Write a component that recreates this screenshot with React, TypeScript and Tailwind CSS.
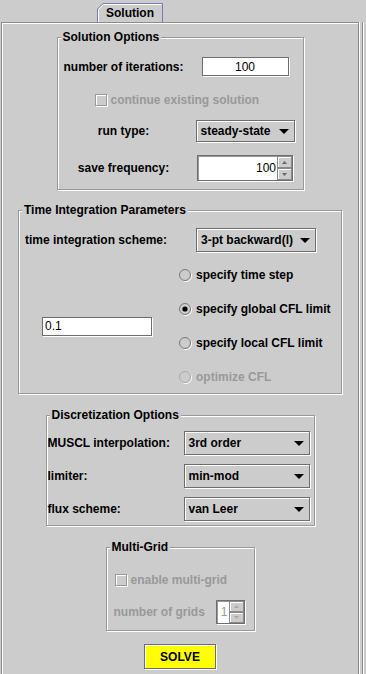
import React from "react";

type Kids = { children?: React.ReactNode; className?: string };

function Arrow() {
  return (
    <svg width="10" height="5" viewBox="0 0 10 5" className="shrink-0">
      <polygon points="0,0 10,0 5,5" fill="#000" />
    </svg>
  );
}

function Combo({ value, className = "" }: { value: string; className?: string }) {
  return (
    <div
      className={`flex items-center justify-between bg-[#cccccc] border border-[#6e6e6e] shadow-[inset_1px_1px_0_#fff,1px_1px_0_#fff] pl-[4px] pr-[5px] ${className}`}
    >
      <span>{value}</span>
      <Arrow />
    </div>
  );
}

function TextField({ value, className = "" }: { value: string; className?: string }) {
  return (
    <div
      className={`flex items-center bg-white border border-[#6e6e6e] shadow-[1px_1px_0_#fff] font-normal ${className}`}
    >
      {value}
    </div>
  );
}

function SpinBtn({ up, disabled }: { up?: boolean; disabled?: boolean }) {
  return (
    <div className="flex-1 flex items-center justify-center bg-[#cccccc] border border-[#8a8a8a] shadow-[inset_1px_1px_0_#fff]">
      <svg width="5" height="3" viewBox="0 0 5 3">
        <polygon points={up ? "0,3 5,3 2.5,0" : "0,0 5,0 2.5,3"} fill={disabled ? "#aaa" : "#666"} />
      </svg>
    </div>
  );
}

function Spinner({
  value,
  className = "",
  disabled,
}: {
  value: string;
  className?: string;
  disabled?: boolean;
}) {
  return (
    <div className={`flex border border-[#6e6e6e] shadow-[1px_1px_0_#fff] ${className}`}>
      <div
        className={`flex-1 flex items-center justify-end pr-px bg-white font-normal shadow-[inset_1px_1px_0_#999] ${
          disabled ? "text-[#999]" : ""
        }`}
      >
        {value}
      </div>
      <div className="flex flex-col w-[15px]">
        <SpinBtn up disabled={disabled} />
        <SpinBtn disabled={disabled} />
      </div>
    </div>
  );
}

function CheckBox() {
  return (
    <span className="inline-block shrink-0 w-[12px] h-[12px] border border-[#999] shadow-[inset_1px_1px_0_#fff,1px_1px_0_#fff]" />
  );
}

function Radio({ checked, disabled }: { checked?: boolean; disabled?: boolean }) {
  return (
    <svg width="13" height="13" viewBox="0 0 13 13" className="shrink-0">
      <circle cx="7" cy="7" r="5.5" fill="none" stroke="#fff" />
      <circle cx="6" cy="6" r="5.5" fill="#cccccc" stroke={disabled ? "#aaa" : "#777"} />
      {checked && <circle cx="6" cy="6" r="2.6" fill="#000" />}
    </svg>
  );
}

function Group({ title, className = "", children }: Kids & { title: string }) {
  return (
    <fieldset
      className={`border border-[#999] shadow-[inset_1px_1px_0_#fff,1px_1px_0_#fff] ${className}`}
    >
      <legend className="ml-[3px] px-[2px] bg-[#cccccc] leading-[14px]">{title}</legend>
      {children}
    </fieldset>
  );
}

function RadioRow({ label, checked, disabled }: { label: string; checked?: boolean; disabled?: boolean }) {
  return (
    <div className={`flex items-center gap-[4px] h-[14px] ${disabled ? "text-[#999]" : ""}`}>
      <Radio checked={checked} disabled={disabled} />
      <span>{label}</span>
    </div>
  );
}

function DiscRow({ label, value, className = "" }: { label: string; value: string; className?: string }) {
  return (
    <div className={`flex items-center h-[24px] ${className}`}>
      <span className="w-[137px] pl-px">{label}</span>
      <Combo value={value} className="w-[126px] h-[24px]" />
    </div>
  );
}

export default function App() {
  return (
    <div className="w-[366px] h-[674px] overflow-hidden bg-[#cccccc] text-black font-bold text-[12px] leading-[14px] font-['Liberation_Sans',Arial,sans-serif] flex flex-col">
      {/* tab strip */}
      <div className="h-[22px] shrink-0">
        <div className="relative ml-[97px] mt-[3px] w-[66px] h-[19px] flex items-center justify-center">
          <svg width="66" height="19" viewBox="0 0 66 19" className="absolute inset-0">
            <path d="M0.5 19 V6 L6 0.5 H65.5 V19" fill="#cccccc" stroke="#7a7aae" />
            <path d="M1.5 19 V6.5 L6.5 1.5 H64.5" fill="none" stroke="#fff" />
          </svg>
          <span className="relative">Solution</span>
        </div>
      </div>

      <div className="flex flex-1">
        <div className="ml-px w-[358px] flex flex-col items-center border-l border-t border-r border-[#8c8c8c] shadow-[inset_1px_1px_0_#fff,1px_0_0_#fff]">
          {/* Solution Options */}
          <Group title="Solution Options" className="mt-[7px] w-[247px] pb-[8px]">
            <div className="grid grid-cols-[132px_111px] justify-items-center">
              <div className="mt-[13px] h-[19px] flex items-center">number of iterations:</div>
              <TextField value="100" className="mt-[13px] w-[87px] h-[19px] justify-center" />

              <div className="col-span-2 justify-self-start mt-[17px] h-[13px] pl-[37px] flex items-center gap-[4px] text-[#999]">
                <CheckBox />
                <span>continue existing solution</span>
              </div>

              <div className="mt-[14px] h-[22px] flex items-center">run type:</div>
              <Combo value="steady-state" className="mt-[14px] w-[99px] h-[22px]" />

              <div className="mt-[13px] h-[26px] flex items-center">save frequency:</div>
              <Spinner value="100" className="mt-[13px] w-[96px] h-[26px]" />
            </div>
          </Group>

          {/* Time Integration Parameters */}
          <Group title="Time Integration Parameters" className="mt-[13px] w-[324px] pb-[9px]">
            <div className="mt-[11px] flex items-center pl-[6px]">
              <span className="w-[171px]">time integration scheme:</span>
              <Combo value="3-pt backward(l)" className="w-[120px] h-[24px]" />
            </div>
            <div className="mt-[16px] flex items-center">
              <TextField value="0.1" className="ml-[23px] w-[110px] h-[19px] pl-[2px]" />
              <div className="ml-[27px] flex flex-col gap-[20px]">
                <RadioRow label="specify time step" />
                <RadioRow label="specify global CFL limit" checked />
                <RadioRow label="specify local CFL limit" />
                <RadioRow label="optimize CFL" disabled />
              </div>
            </div>
          </Group>

          {/* Discretization Options */}
          <Group title="Discretization Options" className="mt-[14px] w-[269px] pb-[4px]">
            <DiscRow label="MUSCL interpolation:" value="3rd order" className="mt-[9px]" />
            <DiscRow label="limiter:" value="min-mod" className="mt-[9px]" />
            <DiscRow label="flux scheme:" value="van Leer" className="mt-[9px]" />
          </Group>

          {/* Multi-Grid */}
          <Group title="Multi-Grid" className="mt-[14px] w-[149px] pb-[6px]">
            <div className="mt-[19px] h-[13px] pl-[8px] flex items-center gap-[4px] text-[#999]">
              <CheckBox />
              <span>enable multi-grid</span>
            </div>
            <div className="mt-[14px] h-[24px] pl-[7px] flex items-center text-[#999]">
              <span className="w-[102px]">number of grids</span>
              <Spinner value="1" disabled className="w-[29px] h-[24px]" />
            </div>
          </Group>

          <button className="mt-[13px] w-[72px] h-[25px] shrink-0 bg-[#ffff00] border border-[#6e6e6e] shadow-[inset_1px_1px_0_#fff,1px_1px_0_#fff] flex items-center justify-center font-bold">
            SOLVE
          </button>
        </div>
        <div className="ml-[3px] w-[2px] border-l border-r border-l-[#8c8c8c] border-r-white" />
      </div>
    </div>
  );
}
